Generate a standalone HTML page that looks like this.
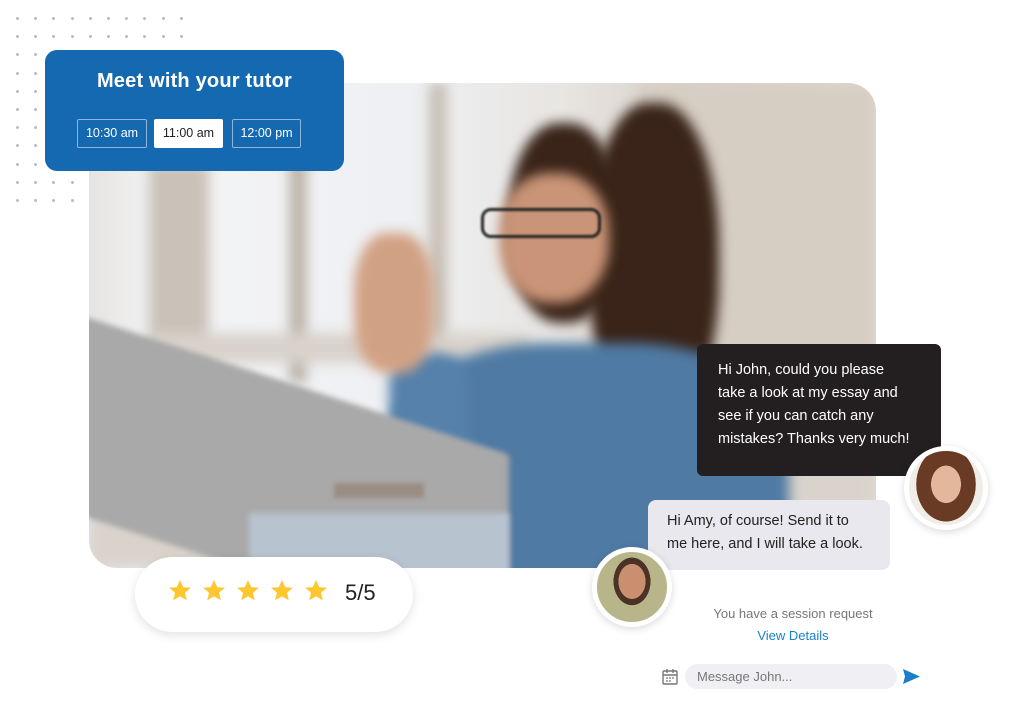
<!DOCTYPE html>
<html><head><meta charset="utf-8"><style>
*{margin:0;padding:0;box-sizing:border-box}
body{width:1024px;height:707px;background:#fff;position:relative;overflow:hidden;font-family:"Liberation Sans",sans-serif}
.a{position:absolute}
.dot{position:absolute;width:3px;height:3px;background:#b9bcc4;border-radius:50%}
.photo{left:89px;top:83px;width:787px;height:485px;border-radius:28px;overflow:hidden;background:linear-gradient(90deg,#e6e4e2 0%,#f4f4f6 10%,#eef0f3 40%,#e8e5e2 60%,#d9d2ca 75%,#e4ddd6 100%)}
.b{position:absolute;filter:blur(6px)}
.card{left:45px;top:50px;width:299px;height:121px;background:#1569b0;border-radius:12px;color:#fff}
.tb{position:absolute;top:69px;height:29px;border:1px solid #8fb4dc;border-radius:2px;font-size:12.5px;line-height:27px;text-align:center;color:#fff}
.bub{position:absolute;font-size:14.5px;line-height:23px}
.av{position:absolute;border-radius:50%;border:5px solid #fff;box-shadow:0 2px 8px rgba(0,0,0,.15);overflow:hidden}
</style></head><body>
<div id="dots"></div>
<script>
var d=document.getElementById('dots'),h='';
for(var r=0;r<11;r++){var n=r<2?10:4;for(var c=0;c<n;c++){h+='<div class="dot" style="left:'+(16+c*18.2)+'px;top:'+(17+r*18.2)+'px"></div>';}}
d.innerHTML=h;
</script>
<div class="a photo">
 <div class="b" style="left:60px;top:80px;width:60px;height:260px;background:#c9c2b8"></div>
 <div class="b" style="left:200px;top:0;width:18px;height:300px;background:#bdb5aa"></div>
 <div class="b" style="left:340px;top:0;width:18px;height:300px;background:#c7c0b6"></div>
 <div class="b" style="left:60px;top:250px;width:380px;height:30px;background:#d8d2cb"></div>
 <div class="b" style="left:550px;top:0;width:237px;height:280px;background:#d6cdc3"></div>
 <div class="b" style="left:0;top:380px;width:787px;height:105px;background:#d9d3cc"></div>
 <div class="b" style="left:420px;top:40px;width:110px;height:200px;border-radius:45%;background:#3a2419"></div>
 <div class="b" style="left:500px;top:20px;width:130px;height:320px;border-radius:45%;background:#3a2419"></div>
 <div class="b" style="left:300px;top:260px;width:400px;height:240px;border-radius:40% 40% 10% 10%;background:#4f7aa3"></div>
 <div class="b" style="left:300px;top:270px;width:80px;height:160px;border-radius:30px;background:#5581aa"></div>
 <div class="b" style="left:410px;top:90px;width:110px;height:130px;border-radius:45%;background:#c99477"></div>
 <div class="b" style="left:265px;top:150px;width:80px;height:140px;border-radius:40%;background:#d1a184"></div>
 <div class="a" style="left:392px;top:125px;width:120px;height:30px;border:3px solid #222;border-radius:10px;filter:blur(1px)"></div>
 <div class="b" style="left:-20px;top:300px;width:440px;height:200px;background:#a9a9a9;transform:skewY(18deg);filter:blur(3px)"></div>
 <div class="b" style="left:160px;top:430px;width:260px;height:60px;background:#b7c3cf;filter:blur(3px)"></div>
 <div class="b" style="left:245px;top:400px;width:90px;height:15px;background:#9a8e84;filter:blur(2px)"></div>
</div>
<div class="a card">
 <div class="a" style="left:0;width:299px;top:20px;text-align:center;font-size:20px;font-weight:bold;letter-spacing:0.2px">Meet with your tutor</div>
 <div class="tb" style="left:32px;width:70px">10:30 am</div>
 <div class="tb" style="left:109px;width:69px;background:#fff;color:#222;border-color:#fff">11:00 am</div>
 <div class="tb" style="left:187px;width:69px">12:00 pm</div>
</div>
<div class="bub" style="left:697px;top:344px;width:244px;height:132px;background:#231f20;color:#fff;border-radius:6px;padding:15px 0 0 21px">Hi John, could you please<br>take a look at my essay and<br>see if you can catch any<br>mistakes? Thanks very much!</div>
<div class="bub" style="left:648px;top:500px;width:242px;height:70px;background:#e8e8ee;color:#222;border-radius:8px;padding:10px 0 0 19px">Hi Amy, of course! Send it to<br>me here, and I will take a look.</div>
<div class="av" style="left:904px;top:446px;width:84px;height:84px;background:radial-gradient(ellipse 40% 50% at 50% 45%,#e3b79c 0 50%,#6a3b24 51% 100%,#f0ece8 101%)"></div>
<div class="av" style="left:592px;top:547px;width:80px;height:80px;background:radial-gradient(ellipse 35% 45% at 50% 42%,#c98f6f 0 55%,#4a3326 56% 75%,#b9b58a 76%)"></div>
<div class="a" style="left:135px;top:557px;width:278px;height:75px;background:#fff;border-radius:38px;box-shadow:0 3px 10px rgba(0,0,0,.12)"></div>
<svg class="a" style="left:168px;top:579px" width="170" height="24" viewBox="0 0 170 24">
<g fill="#fdc82f"><path id="s" d="M12 1l3.2 7.1 7.6.7-5.8 5 1.8 7.5L12 17.4 5.2 21.3 7 13.8 1.2 8.8l7.6-.7z"/>
<use href="#s" x="34"/><use href="#s" x="68"/><use href="#s" x="102"/><use href="#s" x="136"/></g></svg>
<div class="a" style="left:345px;top:580px;font-size:22px;color:#222">5/5</div>
<div class="a" style="left:680px;top:606px;width:226px;text-align:center;font-size:13px;color:#777">You have a session request</div>
<div class="a" style="left:680px;top:628px;width:226px;text-align:center;font-size:13px;color:#1a7fc8">View Details</div>
<svg class="a" style="left:662px;top:668px" width="16" height="17" viewBox="0 0 16 17" fill="none" stroke="#777" stroke-width="1.4"><rect x="1" y="3" width="14" height="13" rx="1"/><path d="M1 7h14M5 1v4M11 1v4"/><path d="M4 10h2M7 10h2M10 10h2M4 13h2M7 13h2" stroke-width="1.2"/></svg>
<div class="a" style="left:685px;top:664px;width:212px;height:25px;background:#f0f0f4;border-radius:13px;font-size:13px;color:#777;padding:5px 0 0 12px">Message John...</div>
<svg class="a" style="left:903px;top:669px" width="17" height="15" viewBox="0 0 17 15"><path d="M0 0l17 7.5L0 15l2-7.5z" fill="#1a7fc8"/></svg>
</body></html>
